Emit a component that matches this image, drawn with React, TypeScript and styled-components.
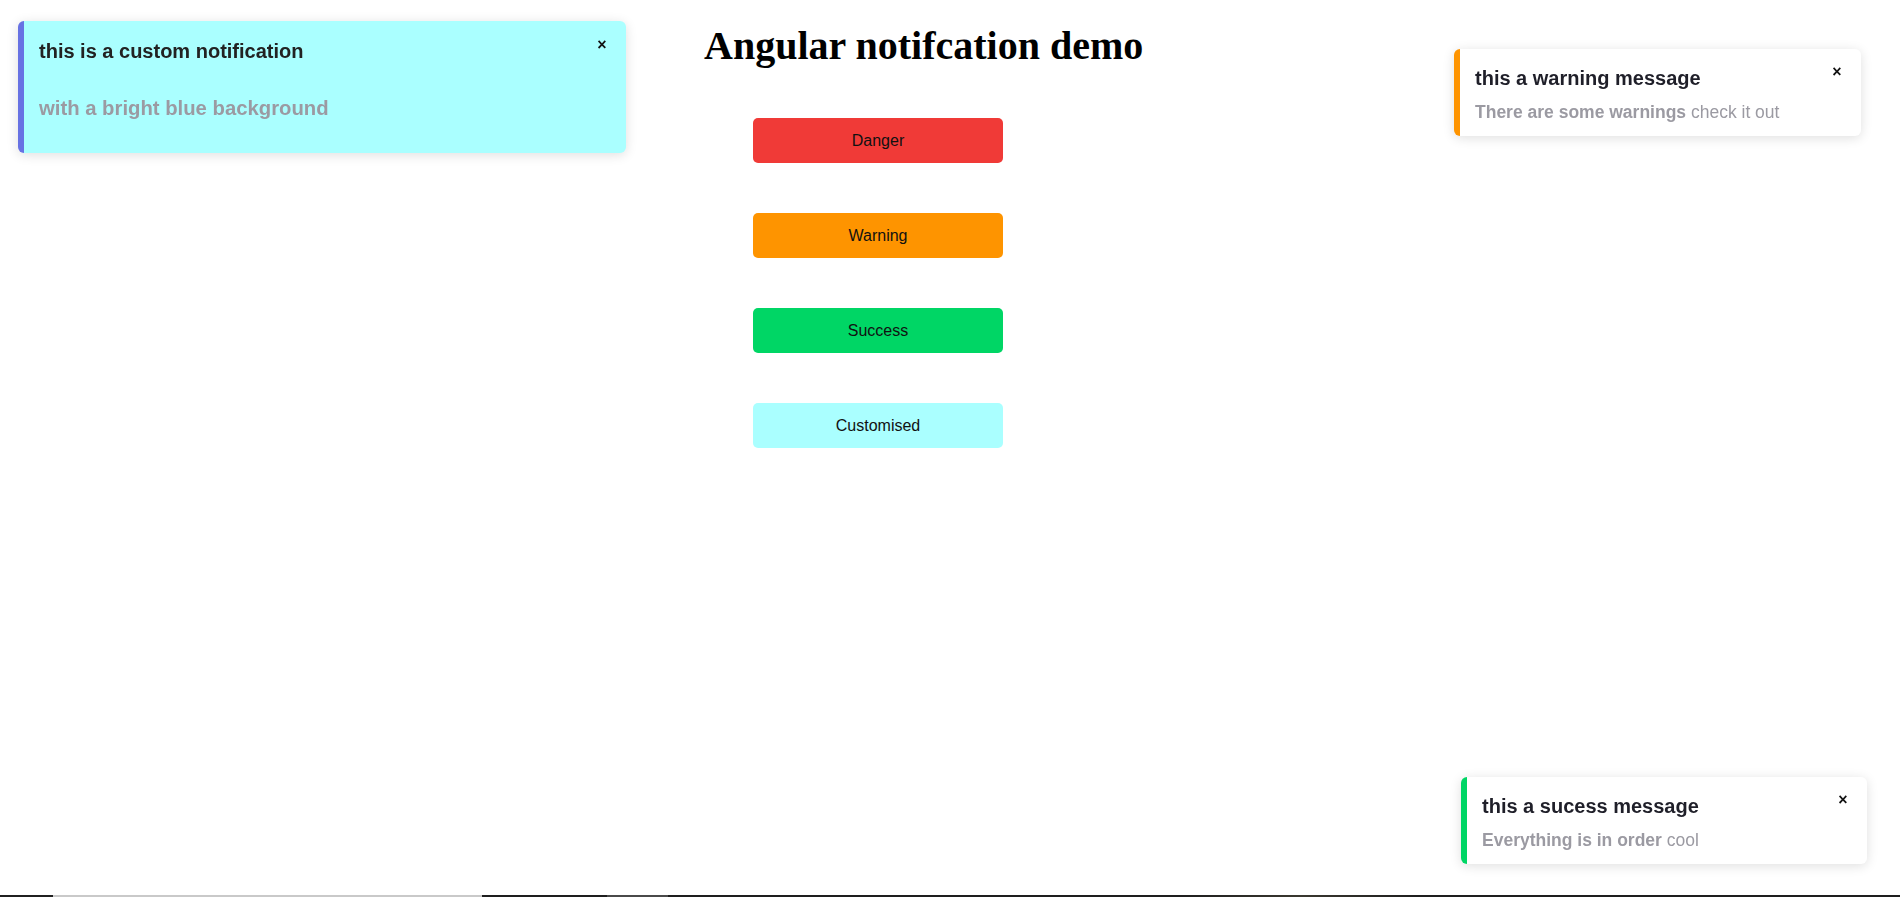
import React from "react";
import styled, { createGlobalStyle } from "styled-components";

const GlobalStyle = createGlobalStyle`
	html, body {
		margin: 0;
		padding: 0;
		background: #fff;
		font-family: "Liberation Sans", Arial, sans-serif;
	}
`;

const Page = styled.div`
	min-height: 100vh;
	display: flex;
	flex-direction: column;
	box-sizing: border-box;
`;

const Main = styled.main`
	flex: 1;
	display: flex;
	flex-direction: column;
	align-items: flex-start;
	padding: 23px 0 0 704px;
`;

const Heading = styled.h1`
	margin: 0;
	font-family: "Liberation Serif", "Times New Roman", serif;
	font-size: 40px;
	font-weight: bold;
	line-height: 46px;
	color: #000;
`;

const ButtonList = styled.div`
	display: flex;
	flex-direction: column;
	gap: 50px;
	margin: 49px 0 0 49px;
`;

const DemoButton = styled.button<{ $bg: string }>`
	width: 250px;
	height: 45px;
	border: 0;
	outline: 0;
	border-radius: 5px;
	background: ${(p) => p.$bg};
	color: #111;
	font-family: "Liberation Sans", Arial, sans-serif;
	font-size: 16px;
	cursor: pointer;
`;

const Strip = styled.div`
	height: 2px;
	background: linear-gradient(
		to right,
		#202020 0,
		#202020 53px,
		#c9c9c9 53px,
		#c9c9c9 482px,
		#1e1e1e 482px,
		#1e1e1e 607px,
		#4a4a4a 607px,
		#4a4a4a 668px,
		#1e1e1e 668px,
		#1e1e1e 1180px,
		#3a3830 1300px,
		#1e1e1e 1420px,
		#1e1e1e 100%
	);
`;

const Toast = styled.div<{ $accent: string; $bg?: string; $custom?: boolean }>`
	position: fixed;
	box-sizing: border-box;
	display: flex;
	flex-direction: column;
	background: ${(p) => p.$bg || "#fff"};
	border-left: 6px solid ${(p) => p.$accent};
	border-radius: 6px;
	box-shadow: 0 2px 12px rgba(0, 0, 0, 0.13);
	padding: ${(p) => (p.$custom ? "19px 20px 32px 15px" : "18px 20px 14px 15px")};
`;

const ToastHead = styled.div`
	display: flex;
	align-items: flex-start;
	justify-content: space-between;
`;

const ToastTitle = styled.div<{ $color?: string }>`
	font-size: 20px;
	font-weight: bold;
	line-height: 23px;
	color: ${(p) => p.$color || "#1f1f29"};
`;

const CloseButton = styled.button`
	border: 0;
	outline: 0;
	background: none;
	padding: 0;
	margin: -2px -4px 0 0;
	width: 16px;
	height: 14px;
	line-height: 14px;
	font-family: "Liberation Sans", Arial, sans-serif;
	font-size: 16px;
	font-weight: bold;
	color: #111;
	cursor: pointer;
`;

const ToastBody = styled.div<{ $custom?: boolean }>`
	margin-top: ${(p) => (p.$custom ? "34px" : "12px")};
	font-size: ${(p) => (p.$custom ? "20.3px" : "17.5px")};
	font-weight: ${(p) => (p.$custom ? "bold" : "normal")};
	line-height: ${(p) => (p.$custom ? "23px" : "20px")};
	color: #9b9aa2;

	b {
		font-weight: bold;
	}
`;

const buttons = [
	{ label: "Danger", bg: "#f03a37" },
	{ label: "Warning", bg: "#fe9400" },
	{ label: "Success", bg: "#00d665" },
	{ label: "Customised", bg: "#aaffff" },
];

const App: React.FC = () => {
	return (
		<Page>
			<GlobalStyle />
			<Main>
				<Heading>Angular notifcation demo</Heading>
				<ButtonList>
					{buttons.map((b) => (
						<DemoButton key={b.label} $bg={b.bg}>
							{b.label}
						</DemoButton>
					))}
				</ButtonList>
			</Main>
			<Strip />

			<Toast
				$accent="#6772e3"
				$bg="#aaffff"
				$custom
				style={{ left: 18, top: 21, width: 608, height: 132 }}
			>
				<ToastHead>
					<ToastTitle $color="#222">this is a custom notification</ToastTitle>
					<CloseButton>×</CloseButton>
				</ToastHead>
				<ToastBody $custom>with a bright blue background</ToastBody>
			</Toast>

			<Toast $accent="#fe9400" style={{ right: 39, top: 49, width: 407, height: 87 }}>
				<ToastHead>
					<ToastTitle>this a warning message</ToastTitle>
					<CloseButton>×</CloseButton>
				</ToastHead>
				<ToastBody>
					<b>There are some warnings</b> check it out
				</ToastBody>
			</Toast>

			<Toast $accent="#00d665" style={{ right: 33, bottom: 33, width: 406, height: 87 }}>
				<ToastHead>
					<ToastTitle>this a sucess message</ToastTitle>
					<CloseButton>×</CloseButton>
				</ToastHead>
				<ToastBody>
					<b>Everything is in order</b> cool
				</ToastBody>
			</Toast>
		</Page>
	);
};

export default App;
